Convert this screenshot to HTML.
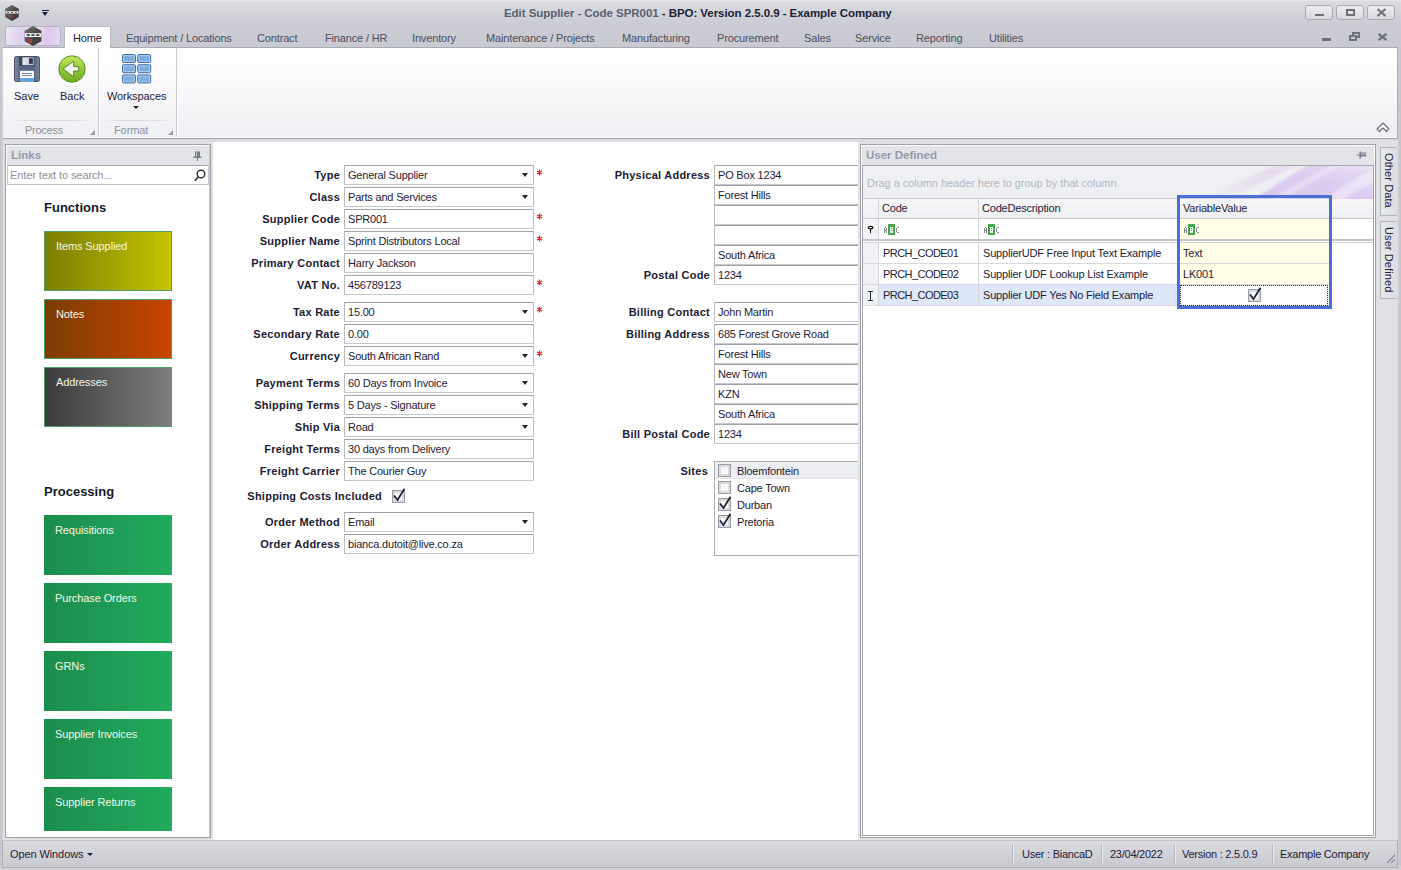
<!DOCTYPE html><html><head><meta charset="utf-8"><style>*{box-sizing:border-box;margin:0;padding:0}
html,body{width:1401px;height:870px;overflow:hidden}
body{position:relative;background:#dfe0e4;font-family:"Liberation Sans",sans-serif;font-size:11px;color:#1e2236}
.a{position:absolute}
.t{position:absolute;white-space:nowrap;line-height:13px}
#titlebar{left:0;top:0;width:1401px;height:26px;background:linear-gradient(#ececef 0px,#dcdde2 1px,#d0d1d7 16px,#cbccd3 26px)}
#tabstrip{left:0;top:26px;width:1401px;height:22px;background:linear-gradient(#cbccd3,#c9cad1)}
.tab{top:32px;letter-spacing:-0.15px}
#ribbon{left:3px;top:47px;width:1395px;height:92px;background:linear-gradient(#ffffff 0%,#f8f8fa 50%,#eeeff2 100%);border:1px solid #a9abb2;border-left:none;border-bottom-color:#a3a5ac}
.winbtn{position:absolute;top:5px;width:28px;height:15px;border:1px solid #a9abb3;border-radius:3px;background:linear-gradient(#eeeef1,#d7d8dd)}
.lbl{position:absolute;font-weight:bold;text-align:right;color:#1c2134;letter-spacing:0.25px;white-space:nowrap;line-height:13px}
.fld{position:absolute;height:20px;border:1px solid #b9bbc1;border-top-color:#a0a2a9;border-bottom-color:#c6c8cd;background:#fff;padding-left:3px;line-height:18px;white-space:nowrap;overflow:hidden;color:#1e2236;letter-spacing:-0.2px}
.dd{position:absolute;width:0;height:0;border-left:3.5px solid transparent;border-right:3.5px solid transparent;border-top:4px solid #1e2236}
.req{position:absolute;color:#d8282a;font-weight:normal;font-size:16px;line-height:16px}
.tile{position:absolute;left:44px;width:128px;height:60px;color:#f4f6e8;padding:8px 0 0 11px;letter-spacing:-0.1px;line-height:13px}
.gtile{background:linear-gradient(90deg,#1c8d4c,#21ab5c)}
.cb{position:absolute;width:13px;height:13px;border:1px solid #9a9da5;background:#fbfbfc;box-shadow:inset 0 0 0 2px #d9dbe0}
.gc{position:absolute;height:21px;line-height:20px;padding-left:4px;white-space:nowrap;overflow:hidden;letter-spacing:-0.2px}
</style></head><body>
<div class="a" id="titlebar"></div>
<div class="a" id="tabstrip"></div>
<svg class="a" style="left:5px;top:5px" width="14" height="16" viewBox="0 0 14 16">
<defs><linearGradient id="hx" x1="0" y1="0" x2="1" y2="1"><stop offset="0" stop-color="#7a7a7a"/><stop offset="0.5" stop-color="#4a4a4a"/><stop offset="1" stop-color="#333"/></linearGradient></defs>
<polygon points="7,0 13.8,3.8 13.8,12 7,16 0.2,12 0.2,3.8" fill="url(#hx)"/>
<rect x="0.6" y="6.2" width="12.8" height="2.3" fill="#f0f0f0"/><rect x="2" y="6.9" width="2.2" height="0.9" fill="#555"/><rect x="5.9" y="6.9" width="2.2" height="0.9" fill="#555"/><rect x="9.8" y="6.9" width="2.2" height="0.9" fill="#555"/>
<rect x="3.6" y="9.6" width="3" height="3" fill="#a04040"/></svg>
<div class="a" style="left:42px;top:10px;width:7px;height:1px;background:#1e2236"></div>
<div class="dd" style="left:42px;top:12px;border-left-width:3.5px;border-right-width:3.5px;border-top-width:4px"></div>
<div class="t" style="left:504px;top:7px;font-weight:bold;font-size:11.5px;letter-spacing:-0.05px;color:#5a6072">Edit Supplier - Code SPR001<span style="color:#1c2236"> - BPO: Version 2.5.0.9 - Example Company</span></div>
<div class="winbtn" style="left:1305px"></div>
<div class="winbtn" style="left:1336px"></div>
<div class="winbtn" style="left:1367px"></div>
<div class="a" style="left:1315px;top:14px;width:9px;height:2px;background:#6e7079"></div>
<div class="a" style="left:1346px;top:9px;width:9px;height:7px;border:2px solid #6e7079"></div>
<svg class="a" style="left:1376px;top:8px" width="11" height="9" viewBox="0 0 11 9"><path d="M1.5 1 L9.5 8 M9.5 1 L1.5 8" stroke="#6e7079" stroke-width="2.2"/></svg>
<div class="a" style="left:1322px;top:38px;width:9px;height:3px;background:#6e7079"></div>
<svg class="a" style="left:1349px;top:32px" width="11" height="9" viewBox="0 0 11 9"><rect x="4" y="1" width="6" height="4" fill="none" stroke="#6e7079" stroke-width="2"/><rect x="1" y="4" width="6" height="4" fill="#cbccd3" stroke="#6e7079" stroke-width="2"/></svg>
<svg class="a" style="left:1377px;top:33px" width="11" height="8" viewBox="0 0 11 8"><path d="M1.5 0.8 L9.5 7.2 M9.5 0.8 L1.5 7.2" stroke="#6e7079" stroke-width="2.2"/></svg>
<div class="a" style="left:5px;top:26px;width:56px;height:20px;border:1px solid #b7b3c0;border-radius:2px;background:linear-gradient(100deg,#ece6f4 0%,#ddd0ee 30%,#efe6f6 50%,#dcc8ee 75%,#e6daf2 100%)"></div>
<svg class="a" style="left:24px;top:26px" width="18" height="20" viewBox="0 0 18 20">
<polygon points="9,0 17.4,4.8 17.4,15.2 9,20 0.6,15.2 0.6,4.8" fill="url(#hx)"/>
<rect x="0.8" y="7.2" width="16.4" height="3.8" fill="#f4f4f4"/><rect x="2.6" y="8.3" width="3.2" height="1.6" fill="#333"/><rect x="7.4" y="8.3" width="3.2" height="1.6" fill="#333"/><rect x="12.2" y="8.3" width="3.2" height="1.6" fill="#333"/>
<rect x="4.3" y="12.6" width="3.8" height="4.6" fill="#a84040" opacity="0.85"/></svg>
<div class="a" style="left:64px;top:26px;width:47px;height:23px;background:#fff;border:1px solid #b8bac1;border-bottom:none;border-radius:2px 2px 0 0"></div>
<div class="t tab" style="left:73px;color:#1e2236">Home</div>
<div class="t tab" style="left:126px;color:#4a4e5e">Equipment / Locations</div>
<div class="t tab" style="left:257px;color:#4a4e5e">Contract</div>
<div class="t tab" style="left:325px;color:#4a4e5e">Finance / HR</div>
<div class="t tab" style="left:412px;color:#4a4e5e">Inventory</div>
<div class="t tab" style="left:486px;color:#4a4e5e">Maintenance / Projects</div>
<div class="t tab" style="left:622px;color:#4a4e5e">Manufacturing</div>
<div class="t tab" style="left:717px;color:#4a4e5e">Procurement</div>
<div class="t tab" style="left:804px;color:#4a4e5e">Sales</div>
<div class="t tab" style="left:855px;color:#4a4e5e">Service</div>
<div class="t tab" style="left:916px;color:#4a4e5e">Reporting</div>
<div class="t tab" style="left:989px;color:#4a4e5e">Utilities</div>
<div class="a" id="ribbon"></div>
<div class="a" style="left:65px;top:46px;width:45px;height:3px;background:#fff"></div>
<div class="a" style="left:98px;top:48px;width:1px;height:90px;background:#cacbd1"></div>
<div class="a" style="left:99px;top:48px;width:1px;height:90px;background:#fdfdfe"></div>
<div class="a" style="left:176px;top:48px;width:1px;height:90px;background:#cacbd1"></div>
<div class="a" style="left:177px;top:48px;width:1px;height:90px;background:#fdfdfe"></div>
<div class="a" style="left:10px;top:120px;width:82px;height:1px;background:linear-gradient(90deg,rgba(220,221,226,0),#dcdde2 20%,#dcdde2 80%,rgba(220,221,226,0))"></div>
<div class="a" style="left:104px;top:120px;width:66px;height:1px;background:linear-gradient(90deg,rgba(220,221,226,0),#dcdde2 20%,#dcdde2 80%,rgba(220,221,226,0))"></div>
<div class="t" style="left:25px;top:124px;color:#8d909b;letter-spacing:-0.25px">Process</div>
<div class="t" style="left:114px;top:124px;color:#8d909b;letter-spacing:-0.1px">Format</div>
<svg class="a" style="left:90px;top:130px" width="5" height="5"><polygon points="5,0 5,5 0,5" fill="#9a9ca5"/></svg>
<svg class="a" style="left:168px;top:130px" width="5" height="5"><polygon points="5,0 5,5 0,5" fill="#9a9ca5"/></svg>
<svg class="a" style="left:14px;top:56px" width="26" height="26" viewBox="0 0 26 26">
<defs><linearGradient id="fl" x1="0" y1="0" x2="1" y2="0"><stop offset="0" stop-color="#7f8ba5"/><stop offset="0.25" stop-color="#5b6782"/><stop offset="0.75" stop-color="#56627d"/><stop offset="1" stop-color="#7a86a0"/></linearGradient>
<linearGradient id="sh" x1="0" y1="0" x2="1" y2="0"><stop offset="0" stop-color="#eef0f4"/><stop offset="1" stop-color="#b3bac7"/></linearGradient></defs>
<rect x="0.5" y="0.5" width="25" height="25" rx="1.8" fill="url(#fl)" stroke="#3e4860" stroke-width="0.9"/>
<rect x="5" y="0.5" width="15.5" height="9.5" fill="#3c465e"/>
<rect x="8.5" y="1.3" width="11.2" height="7.8" fill="url(#sh)"/>
<rect x="15" y="2.2" width="3.8" height="5.6" fill="#2f3850"/>
<rect x="6" y="14.8" width="14" height="10.7" fill="#f5f7fa"/>
<rect x="6" y="22" width="14" height="3.5" fill="#5fa3d9"/>
<rect x="8" y="17" width="10" height="0.9" fill="#707a90"/><rect x="8" y="19" width="10" height="0.9" fill="#707a90"/></svg>
<div class="t" style="left:14px;top:90px;color:#1e2236">Save</div>
<svg class="a" style="left:58px;top:55px" width="28" height="28" viewBox="0 0 28 28">
<defs><linearGradient id="bk" x1="0" y1="0" x2="0" y2="1"><stop offset="0" stop-color="#c6e85e"/><stop offset="0.5" stop-color="#94c83a"/><stop offset="1" stop-color="#70aa26"/></linearGradient></defs>
<circle cx="14" cy="14" r="13.2" fill="url(#bk)" stroke="#5a8c1c" stroke-width="1"/>
<polygon points="5.1,13.9 15.7,6.1 15.7,11.6 20.6,11.6 20.6,16.1 15.7,16.1 15.7,21.9" fill="#eef1ec" stroke="#4d7d17" stroke-width="0.9" stroke-linejoin="miter"/></svg>
<div class="t" style="left:60px;top:90px;color:#1e2236">Back</div>
<svg class="a" style="left:122px;top:54px" width="30" height="30" viewBox="0 0 30 30"><rect x="0.5" y="0.5" width="13" height="8" rx="1.2" fill="#7cace0" stroke="#4d6f9c" stroke-width="1"/><rect x="1.7" y="1.7" width="10.6" height="5.6" fill="none" stroke="#acd3f7" stroke-width="0.8"/><rect x="15.7" y="0.5" width="13" height="8" rx="1.2" fill="#7cace0" stroke="#4d6f9c" stroke-width="1"/><rect x="16.9" y="1.7" width="10.6" height="5.6" fill="none" stroke="#acd3f7" stroke-width="0.8"/><rect x="0.5" y="10.7" width="13" height="8" rx="1.2" fill="#7cace0" stroke="#4d6f9c" stroke-width="1"/><rect x="1.7" y="11.9" width="10.6" height="5.6" fill="none" stroke="#acd3f7" stroke-width="0.8"/><rect x="15.7" y="10.7" width="13" height="8" rx="1.2" fill="#7cace0" stroke="#4d6f9c" stroke-width="1"/><rect x="16.9" y="11.9" width="10.6" height="5.6" fill="none" stroke="#acd3f7" stroke-width="0.8"/><rect x="0.5" y="20.9" width="13" height="8" rx="1.2" fill="#7cace0" stroke="#4d6f9c" stroke-width="1"/><rect x="1.7" y="22.1" width="10.6" height="5.6" fill="none" stroke="#acd3f7" stroke-width="0.8"/><rect x="15.7" y="20.9" width="13" height="8" rx="1.2" fill="#7cace0" stroke="#4d6f9c" stroke-width="1"/><rect x="16.9" y="22.1" width="10.6" height="5.6" fill="none" stroke="#acd3f7" stroke-width="0.8"/></svg>
<div class="t" style="left:107px;top:90px;color:#1e2236;letter-spacing:-0.1px">Workspaces</div>
<div class="dd" style="left:133px;top:106px;border-left-width:3px;border-right-width:3px;border-top-width:3.5px"></div>
<svg class="a" style="left:1376px;top:122px" width="14" height="11" viewBox="0 0 14 11"><polygon points="7,1 13,7 10.5,9.5 7,6 3.5,9.5 1,7" fill="#fafafc" stroke="#6e7079" stroke-width="1.2" stroke-linejoin="round"/></svg>
<div class="a" style="left:3px;top:137px;width:1394px;height:1px;background:#fbfbfc"></div>
<div class="a" style="left:3px;top:139px;width:1395px;height:4px;background:linear-gradient(#d6d7dc,#e2e3e7)"></div>
<div class="a" style="left:0;top:48px;width:3px;height:822px;background:linear-gradient(90deg,#c3c4ca,#d0d1d6)"></div>
<div class="a" style="left:1398px;top:48px;width:3px;height:822px;background:linear-gradient(90deg,#cdced4,#c4c5cc)"></div>
<div class="a" style="left:5px;top:144px;width:206px;height:694px;border:1px solid #9fa1a9;background:#fff"></div>
<div class="a" style="left:6px;top:145px;width:204px;height:692px;border:1px solid #fdfdfe;border-right-color:#c9cbd0"></div>
<div class="a" style="left:7px;top:146px;width:202px;height:19px;background:#e3e4e8"></div>
<div class="t" style="left:11px;top:149px;font-weight:bold;font-size:11.5px;color:#939aab">Links</div>
<svg class="a" style="left:193px;top:151px" width="9" height="10" viewBox="0 0 9 10"><rect x="2" y="0.5" width="5" height="5.5" fill="#7a7d88"/><rect x="3" y="1" width="1" height="5" fill="#c9cbd2"/><rect x="0.5" y="5.5" width="8" height="1.5" fill="#7a7d88"/><rect x="4" y="7" width="1" height="3" fill="#7a7d88"/></svg>
<div class="a" style="left:7px;top:165px;width:202px;height:20px;border:1px solid #c3c5cb;border-top-color:#a6a8b0;background:#fff"></div>
<div class="t" style="left:10px;top:169px;color:#8e919b;letter-spacing:-0.1px">Enter text to search...</div>
<svg class="a" style="left:194px;top:169px" width="12" height="13" viewBox="0 0 12 13"><circle cx="7" cy="5" r="3.8" fill="none" stroke="#2a2e3e" stroke-width="1.4"/><path d="M4.3 7.8 L0.8 11.8" stroke="#2a2e3e" stroke-width="1.6"/></svg>
<div class="t" style="left:44px;top:200px;font-weight:bold;font-size:13px;color:#151a2c;line-height:15px">Functions</div>
<div class="tile" style="top:231px;background:linear-gradient(90deg,#7b7e00,#c4c400);border:1px solid #4f9c66;padding:8px 0 0 11px">Items Supplied</div>
<div class="tile" style="top:299px;background:linear-gradient(90deg,#7c3d02,#c84500);border:1px solid #4f9c66;padding:8px 0 0 11px">Notes</div>
<div class="tile" style="top:367px;background:linear-gradient(90deg,#3b3b3d,#7d7d7d);border:1px solid #4f9c66;padding:8px 0 0 11px">Addresses</div>
<div class="t" style="left:44px;top:484px;font-weight:bold;font-size:13px;color:#151a2c;line-height:15px">Processing</div>
<div class="tile gtile" style="top:515px;height:60px;padding:9px 0 0 11px">Requisitions</div>
<div class="tile gtile" style="top:583px;height:60px;padding:9px 0 0 11px">Purchase Orders</div>
<div class="tile gtile" style="top:651px;height:60px;padding:9px 0 0 11px">GRNs</div>
<div class="tile gtile" style="top:719px;height:60px;padding:9px 0 0 11px">Supplier Invoices</div>
<div class="tile gtile" style="top:787px;height:44px;padding:9px 0 0 11px">Supplier Returns</div>
<div class="a" style="left:213px;top:142px;width:646px;height:698px;background:#fff"></div>
<div class="lbl" style="right:1061px;top:169px">Type</div>
<div class="fld" style="left:344px;top:165px;width:190px;">General Supplier</div>
<div class="dd" style="left:522px;top:173px"></div>
<svg class="a" style="left:536px;top:169px" width="7" height="7" viewBox="0 0 7 7"><path d="M3.5 0.6 L3.5 6.4 M1 2 L6 5 M6 2 L1 5" stroke="#d8282a" stroke-width="1.3"/></svg>
<div class="lbl" style="right:1061px;top:191px">Class</div>
<div class="fld" style="left:344px;top:187px;width:190px;">Parts and Services</div>
<div class="dd" style="left:522px;top:195px"></div>
<div class="lbl" style="right:1061px;top:213px">Supplier Code</div>
<div class="fld" style="left:344px;top:209px;width:190px;">SPR001</div>
<svg class="a" style="left:536px;top:213px" width="7" height="7" viewBox="0 0 7 7"><path d="M3.5 0.6 L3.5 6.4 M1 2 L6 5 M6 2 L1 5" stroke="#d8282a" stroke-width="1.3"/></svg>
<div class="lbl" style="right:1061px;top:235px">Supplier Name</div>
<div class="fld" style="left:344px;top:231px;width:190px;">Sprint Distributors Local</div>
<svg class="a" style="left:536px;top:235px" width="7" height="7" viewBox="0 0 7 7"><path d="M3.5 0.6 L3.5 6.4 M1 2 L6 5 M6 2 L1 5" stroke="#d8282a" stroke-width="1.3"/></svg>
<div class="lbl" style="right:1061px;top:257px">Primary Contact</div>
<div class="fld" style="left:344px;top:253px;width:190px;">Harry Jackson</div>
<div class="lbl" style="right:1061px;top:279px">VAT No.</div>
<div class="fld" style="left:344px;top:275px;width:190px;">456789123</div>
<svg class="a" style="left:536px;top:279px" width="7" height="7" viewBox="0 0 7 7"><path d="M3.5 0.6 L3.5 6.4 M1 2 L6 5 M6 2 L1 5" stroke="#d8282a" stroke-width="1.3"/></svg>
<div class="lbl" style="right:1061px;top:306px">Tax Rate</div>
<div class="fld" style="left:344px;top:302px;width:190px;">15.00</div>
<div class="dd" style="left:522px;top:310px"></div>
<svg class="a" style="left:536px;top:306px" width="7" height="7" viewBox="0 0 7 7"><path d="M3.5 0.6 L3.5 6.4 M1 2 L6 5 M6 2 L1 5" stroke="#d8282a" stroke-width="1.3"/></svg>
<div class="lbl" style="right:1061px;top:328px">Secondary Rate</div>
<div class="fld" style="left:344px;top:324px;width:190px;">0.00</div>
<div class="lbl" style="right:1061px;top:350px">Currency</div>
<div class="fld" style="left:344px;top:346px;width:190px;">South African Rand</div>
<div class="dd" style="left:522px;top:354px"></div>
<svg class="a" style="left:536px;top:350px" width="7" height="7" viewBox="0 0 7 7"><path d="M3.5 0.6 L3.5 6.4 M1 2 L6 5 M6 2 L1 5" stroke="#d8282a" stroke-width="1.3"/></svg>
<div class="lbl" style="right:1061px;top:377px">Payment Terms</div>
<div class="fld" style="left:344px;top:373px;width:190px;">60 Days from Invoice</div>
<div class="dd" style="left:522px;top:381px"></div>
<div class="lbl" style="right:1061px;top:399px">Shipping Terms</div>
<div class="fld" style="left:344px;top:395px;width:190px;">5 Days - Signature</div>
<div class="dd" style="left:522px;top:403px"></div>
<div class="lbl" style="right:1061px;top:421px">Ship Via</div>
<div class="fld" style="left:344px;top:417px;width:190px;">Road</div>
<div class="dd" style="left:522px;top:425px"></div>
<div class="lbl" style="right:1061px;top:443px">Freight Terms</div>
<div class="fld" style="left:344px;top:439px;width:190px;">30 days from Delivery</div>
<div class="lbl" style="right:1061px;top:465px">Freight Carrier</div>
<div class="fld" style="left:344px;top:461px;width:190px;">The Courier Guy</div>
<div class="lbl" style="right:1061px;top:516px">Order Method</div>
<div class="fld" style="left:344px;top:512px;width:190px;">Email</div>
<div class="dd" style="left:522px;top:520px"></div>
<div class="lbl" style="right:1061px;top:538px">Order Address</div>
<div class="fld" style="left:344px;top:534px;width:190px;">bianca.dutoit@live.co.za</div>
<div class="lbl" style="right:1019px;top:490px">Shipping Costs Included</div>
<div class="cb" style="left:392px;top:490px"></div>
<svg class="a" style="left:392px;top:488px" width="14" height="14" viewBox="0 0 14 14"><path d="M2 7.5 L5.5 12 L12.5 0.8" fill="none" stroke="#1e2236" stroke-width="1.8"/></svg>
<div class="lbl" style="right:691px;top:169px">Physical Address</div>
<div class="fld" style="left:714px;top:165px;width:150px;border-right:none">PO Box 1234</div>
<div class="fld" style="left:714px;top:185px;width:150px;border-right:none">Forest Hills</div>
<div class="fld" style="left:714px;top:205px;width:150px;border-right:none"></div>
<div class="fld" style="left:714px;top:225px;width:150px;border-right:none"></div>
<div class="fld" style="left:714px;top:245px;width:150px;border-right:none">South Africa</div>
<div class="lbl" style="right:691px;top:269px">Postal Code</div>
<div class="fld" style="left:714px;top:265px;width:150px;border-right:none">1234</div>
<div class="lbl" style="right:691px;top:306px">Billing Contact</div>
<div class="fld" style="left:714px;top:302px;width:150px;border-right:none">John Martin</div>
<div class="lbl" style="right:691px;top:328px">Billing Address</div>
<div class="fld" style="left:714px;top:324px;width:150px;border-right:none">685 Forest Grove Road</div>
<div class="fld" style="left:714px;top:344px;width:150px;border-right:none">Forest Hills</div>
<div class="fld" style="left:714px;top:364px;width:150px;border-right:none">New Town</div>
<div class="fld" style="left:714px;top:384px;width:150px;border-right:none">KZN</div>
<div class="fld" style="left:714px;top:404px;width:150px;border-right:none">South Africa</div>
<div class="lbl" style="right:691px;top:428px">Bill Postal Code</div>
<div class="fld" style="left:714px;top:424px;width:150px;border-right:none">1234</div>
<div class="lbl" style="right:693px;top:465px">Sites</div>
<div class="a" style="left:714px;top:461px;width:150px;height:95px;border:1px solid #abadb4;border-right:none;background:#fff"></div>
<div class="a" style="left:715px;top:462px;width:149px;height:17px;background:#eceef1;border-bottom:1px solid #dfe1e5"></div>
<div class="cb" style="left:718px;top:464px"></div>
<div class="t" style="left:737px;top:465px;letter-spacing:-0.2px">Bloemfontein</div>
<div class="cb" style="left:718px;top:481px"></div>
<div class="t" style="left:737px;top:482px;letter-spacing:-0.2px">Cape Town</div>
<div class="cb" style="left:718px;top:498px"></div>
<svg class="a" style="left:718px;top:496px" width="14" height="14" viewBox="0 0 14 14"><path d="M2 7.5 L5.5 12 L12.5 0.8" fill="none" stroke="#1e2236" stroke-width="1.8"/></svg>
<div class="t" style="left:737px;top:499px;letter-spacing:-0.2px">Durban</div>
<div class="cb" style="left:718px;top:515px"></div>
<svg class="a" style="left:718px;top:513px" width="14" height="14" viewBox="0 0 14 14"><path d="M2 7.5 L5.5 12 L12.5 0.8" fill="none" stroke="#1e2236" stroke-width="1.8"/></svg>
<div class="t" style="left:737px;top:516px;letter-spacing:-0.2px">Pretoria</div>
<div class="a" style="left:858px;top:142px;width:2px;height:698px;background:#e3e4e8"></div>
<div class="a" style="left:860px;top:144px;width:516px;height:694px;border:1px solid #9fa1a9;background:#fff"></div>
<div class="a" style="left:861px;top:145px;width:514px;height:692px;border:1px solid #fdfdfe"></div>
<div class="a" style="left:862px;top:146px;width:512px;height:19px;background:#e3e4e8"></div>
<div class="t" style="left:866px;top:149px;font-weight:bold;font-size:11.5px;color:#939aab">User Defined</div>
<svg class="a" style="left:1357px;top:151px" width="10" height="9" viewBox="0 0 10 9"><rect x="3" y="1.5" width="6" height="4" fill="#7a7d88"/><rect x="3.5" y="2.5" width="5" height="1" fill="#c9cbd2"/><rect x="2.5" y="0.5" width="1.5" height="7" fill="#7a7d88"/><rect x="0" y="3.5" width="3" height="1" fill="#7a7d88"/></svg>
<div class="a" style="left:862px;top:165px;width:512px;height:671px;border:1px solid #a3a5ac;background:#fff"></div>
<div class="a" style="left:863px;top:166px;width:510px;height:33px;background:#eff0f3;border-bottom:1px solid #c9cbd1"></div>
<svg class="a" style="left:1100px;top:166px" width="273" height="33" viewBox="0 0 273 33">
<defs><filter id="bl" x="-20%" y="-50%" width="140%" height="200%"><feGaussianBlur stdDeviation="1.6"/></filter>
<linearGradient id="sw1" x1="0" y1="0" x2="1" y2="0"><stop offset="0" stop-color="#e8dcf0" stop-opacity="0"/><stop offset="0.7" stop-color="#e6d6ef" stop-opacity="0.9"/><stop offset="1" stop-color="#e9def2" stop-opacity="0.7"/></linearGradient>
<linearGradient id="sw2" x1="0" y1="1" x2="1" y2="0"><stop offset="0" stop-color="#d6c6ec"/><stop offset="0.6" stop-color="#dccdf0"/><stop offset="1" stop-color="#ebe3f5"/></linearGradient></defs>
<g filter="url(#bl)">
<path d="M90 36 Q140 16 180 -3 L205 -3 Q160 16 125 36 Z" fill="url(#sw1)"/>
<path d="M150 36 Q185 12 212 -3 L276 -3 L276 36 Z" fill="url(#sw2)"/>
<path d="M168 36 Q200 14 238 -3 L246 -3 Q210 16 180 36 Z" fill="#ffffff" opacity="0.35"/>
<path d="M222 36 Q248 14 276 4 L276 16 Q256 24 240 36 Z" fill="#ffffff" opacity="0.4"/>
</g></svg>
<div class="t" style="left:867px;top:177px;color:#b2b5bd;letter-spacing:-0.05px">Drag a column header here to group by that column</div>
<div class="a" style="left:863px;top:199px;width:510px;height:20px;background:linear-gradient(#f7f7f9,#eeeff2);border-bottom:1px solid #c9cbd1"></div>
<div class="a" style="left:878px;top:199px;width:1px;height:40px;background:#d2d4d9"></div>
<div class="a" style="left:978px;top:199px;width:1px;height:40px;background:#d2d4d9"></div>
<div class="a" style="left:1178px;top:199px;width:1px;height:40px;background:#d2d4d9"></div>
<div class="t" style="left:882px;top:202px;letter-spacing:-0.2px">Code</div>
<div class="t" style="left:982px;top:202px;letter-spacing:-0.2px">CodeDescription</div>
<div class="t" style="left:1183px;top:202px;letter-spacing:-0.2px">VariableValue</div>
<div class="a" style="left:1179px;top:219px;width:150px;height:20px;background:#fffde6"></div>
<div class="a" style="left:863px;top:239px;width:510px;height:4px;border-top:2px solid #c3c5cb;border-bottom:1px solid #d3d5da;background:#fff"></div>
<svg class="a" style="left:884px;top:224px" width="16" height="11" viewBox="0 0 16 11" shape-rendering="crispEdges"><g fill="#858991"><rect x="0" y="4" width="1" height="5"/><rect x="2" y="4" width="1" height="5"/><rect x="1" y="3" width="1" height="1"/><rect x="0" y="6" width="3" height="1"/><rect x="12" y="4" width="1" height="4"/><rect x="13" y="3" width="2" height="1"/><rect x="13" y="8" width="2" height="1"/></g><rect x="4" y="0" width="7" height="11" fill="#45a64e"/><rect x="6" y="3" width="3" height="6" fill="#f2fff2"/><rect x="7" y="4" width="1" height="1" fill="#45a64e"/><rect x="7" y="6" width="1" height="1" fill="#45a64e"/></svg>
<svg class="a" style="left:984px;top:224px" width="16" height="11" viewBox="0 0 16 11" shape-rendering="crispEdges"><g fill="#858991"><rect x="0" y="4" width="1" height="5"/><rect x="2" y="4" width="1" height="5"/><rect x="1" y="3" width="1" height="1"/><rect x="0" y="6" width="3" height="1"/><rect x="12" y="4" width="1" height="4"/><rect x="13" y="3" width="2" height="1"/><rect x="13" y="8" width="2" height="1"/></g><rect x="4" y="0" width="7" height="11" fill="#45a64e"/><rect x="6" y="3" width="3" height="6" fill="#f2fff2"/><rect x="7" y="4" width="1" height="1" fill="#45a64e"/><rect x="7" y="6" width="1" height="1" fill="#45a64e"/></svg>
<svg class="a" style="left:1184px;top:224px" width="16" height="11" viewBox="0 0 16 11" shape-rendering="crispEdges"><g fill="#858991"><rect x="0" y="4" width="1" height="5"/><rect x="2" y="4" width="1" height="5"/><rect x="1" y="3" width="1" height="1"/><rect x="0" y="6" width="3" height="1"/><rect x="12" y="4" width="1" height="4"/><rect x="13" y="3" width="2" height="1"/><rect x="13" y="8" width="2" height="1"/></g><rect x="4" y="0" width="7" height="11" fill="#45a64e"/><rect x="6" y="3" width="3" height="6" fill="#f2fff2"/><rect x="7" y="4" width="1" height="1" fill="#45a64e"/><rect x="7" y="6" width="1" height="1" fill="#45a64e"/></svg>
<div class="a" style="left:863px;top:219px;width:15px;height:20px;background:#f3f4f6"></div>
<svg class="a" style="left:867px;top:225px" width="7" height="9" viewBox="0 0 7 9"><ellipse cx="3.5" cy="2.6" rx="2.3" ry="1.3" fill="#fff" stroke="#111" stroke-width="1.2"/><path d="M2.8 4 L4.2 4 L3.9 8.2 L3.1 8.2 Z" fill="#111"/></svg>
<div class="a" style="left:863px;top:243px;width:15px;height:21px;background:#f1f2f4;border-bottom:1px solid #d8d9de"></div>
<div class="a" style="left:878px;top:243px;width:1px;height:21px;background:#d2d4d9"></div>
<div class="gc" style="left:879px;top:243px;width:99px;background:#fff;border-bottom:1px solid #d8d9de;letter-spacing:-0.55px">PRCH_CODE01</div>
<div class="a" style="left:978px;top:243px;width:1px;height:21px;background:#d2d4d9"></div>
<div class="gc" style="left:979px;top:243px;width:199px;background:#fff;border-bottom:1px solid #d8d9de">SupplierUDF Free Input Text Example</div>
<div class="gc" style="left:1179px;top:243px;width:150px;background:#fffde6;border-bottom:1px solid #d8d9de">Text</div>
<div class="a" style="left:1178px;top:243px;width:1px;height:21px;background:#d2d4d9"></div>
<div class="a" style="left:863px;top:264px;width:15px;height:21px;background:#f1f2f4;border-bottom:1px solid #d8d9de"></div>
<div class="a" style="left:878px;top:264px;width:1px;height:21px;background:#d2d4d9"></div>
<div class="gc" style="left:879px;top:264px;width:99px;background:#fff;border-bottom:1px solid #d8d9de;letter-spacing:-0.55px">PRCH_CODE02</div>
<div class="a" style="left:978px;top:264px;width:1px;height:21px;background:#d2d4d9"></div>
<div class="gc" style="left:979px;top:264px;width:199px;background:#fff;border-bottom:1px solid #d8d9de">Supplier UDF Lookup List Example</div>
<div class="gc" style="left:1179px;top:264px;width:150px;background:#fffde6;border-bottom:1px solid #d8d9de">LK001</div>
<div class="a" style="left:1178px;top:264px;width:1px;height:21px;background:#d2d4d9"></div>
<div class="a" style="left:863px;top:285px;width:15px;height:21px;background:#f1f2f4;border-bottom:1px solid #d8d9de"></div>
<div class="a" style="left:878px;top:285px;width:1px;height:21px;background:#d2d4d9"></div>
<div class="gc" style="left:879px;top:285px;width:99px;background:#dde7f8;border-bottom:1px solid #d8d9de;letter-spacing:-0.55px">PRCH_CODE03</div>
<div class="a" style="left:978px;top:285px;width:1px;height:21px;background:#d2d4d9"></div>
<div class="gc" style="left:979px;top:285px;width:199px;background:#dde7f8;border-bottom:1px solid #d8d9de">Supplier UDF Yes No Field Example</div>
<div class="gc" style="left:1179px;top:285px;width:150px;background:#fff;border-bottom:1px solid #d8d9de"></div>
<div class="a" style="left:1178px;top:285px;width:1px;height:21px;background:#d2d4d9"></div>
<svg class="a" style="left:867px;top:291px" width="7" height="10" viewBox="0 0 7 10" shape-rendering="crispEdges"><path d="M1 0.5 L6 0.5 M3.5 0.5 L3.5 9.5 M1 9.5 L6 9.5" stroke="#1e2236" stroke-width="1"/></svg>
<div class="a" style="left:1180px;top:285px;width:148px;height:21px;border:1px dotted #1e2236"></div>
<div class="cb" style="left:1248px;top:289px"></div>
<svg class="a" style="left:1248px;top:287px" width="14" height="14" viewBox="0 0 14 14"><path d="M2 7.5 L5.5 12 L12.5 0.8" fill="none" stroke="#1e2236" stroke-width="1.8"/></svg>
<div class="a" style="left:1177px;top:195px;width:155px;height:114px;border:3px solid #4a6ed6"></div>
<div class="a" style="left:1380px;top:147px;width:17px;height:69px;border:1px solid #b3b5bc;border-right:none;background:linear-gradient(90deg,#e8e9ec,#dcdde2)"></div>
<div class="t" style="left:1382px;top:153px;width:13px;height:62px;writing-mode:vertical-rl;color:#1e2236;letter-spacing:0.1px;line-height:13px">Other Data</div>
<div class="a" style="left:1380px;top:221px;width:17px;height:78px;border:1px solid #b3b5bc;border-right:none;background:linear-gradient(90deg,#e8e9ec,#dcdde2)"></div>
<div class="t" style="left:1382px;top:227px;width:13px;height:72px;writing-mode:vertical-rl;color:#1e2236;letter-spacing:0.1px;line-height:13px">User Defined</div>
<div class="a" style="left:0;top:866px;width:1401px;height:4px;background:#d0d1d6"></div>
<div class="a" style="left:2px;top:840px;width:1396px;height:28px;background:linear-gradient(#dadbe0,#c9cad1);border:1px solid #aeb0b6;border-top-color:#bfc1c6"></div>
<div class="t" style="left:10px;top:848px;color:#1e2236;letter-spacing:-0.1px">Open Windows</div>
<div class="dd" style="left:87px;top:853px;border-left-width:3px;border-right-width:3px;border-top-width:3.5px"></div>
<div class="a" style="left:1012px;top:844px;width:1px;height:20px;background:#b5b7be"></div>
<div class="a" style="left:1013px;top:844px;width:1px;height:20px;background:#eceef1"></div>
<div class="a" style="left:1101px;top:844px;width:1px;height:20px;background:#b5b7be"></div>
<div class="a" style="left:1102px;top:844px;width:1px;height:20px;background:#eceef1"></div>
<div class="a" style="left:1174px;top:844px;width:1px;height:20px;background:#b5b7be"></div>
<div class="a" style="left:1175px;top:844px;width:1px;height:20px;background:#eceef1"></div>
<div class="a" style="left:1272px;top:844px;width:1px;height:20px;background:#b5b7be"></div>
<div class="a" style="left:1273px;top:844px;width:1px;height:20px;background:#eceef1"></div>
<div class="t" style="left:1022px;top:848px;color:#1e2236;letter-spacing:-0.25px">User : BiancaD</div>
<div class="t" style="left:1110px;top:848px;color:#1e2236;letter-spacing:-0.25px">23/04/2022</div>
<div class="t" style="left:1182px;top:848px;color:#1e2236;letter-spacing:-0.25px">Version : 2.5.0.9</div>
<div class="t" style="left:1280px;top:848px;color:#1e2236;letter-spacing:-0.25px">Example Company</div>
<svg class="a" style="left:1384px;top:852px" width="12" height="12" viewBox="0 0 12 12"><path d="M11 3 L3 11 M11 7 L7 11" stroke="#8b8e98" stroke-width="1.2"/></svg>
</body></html>
